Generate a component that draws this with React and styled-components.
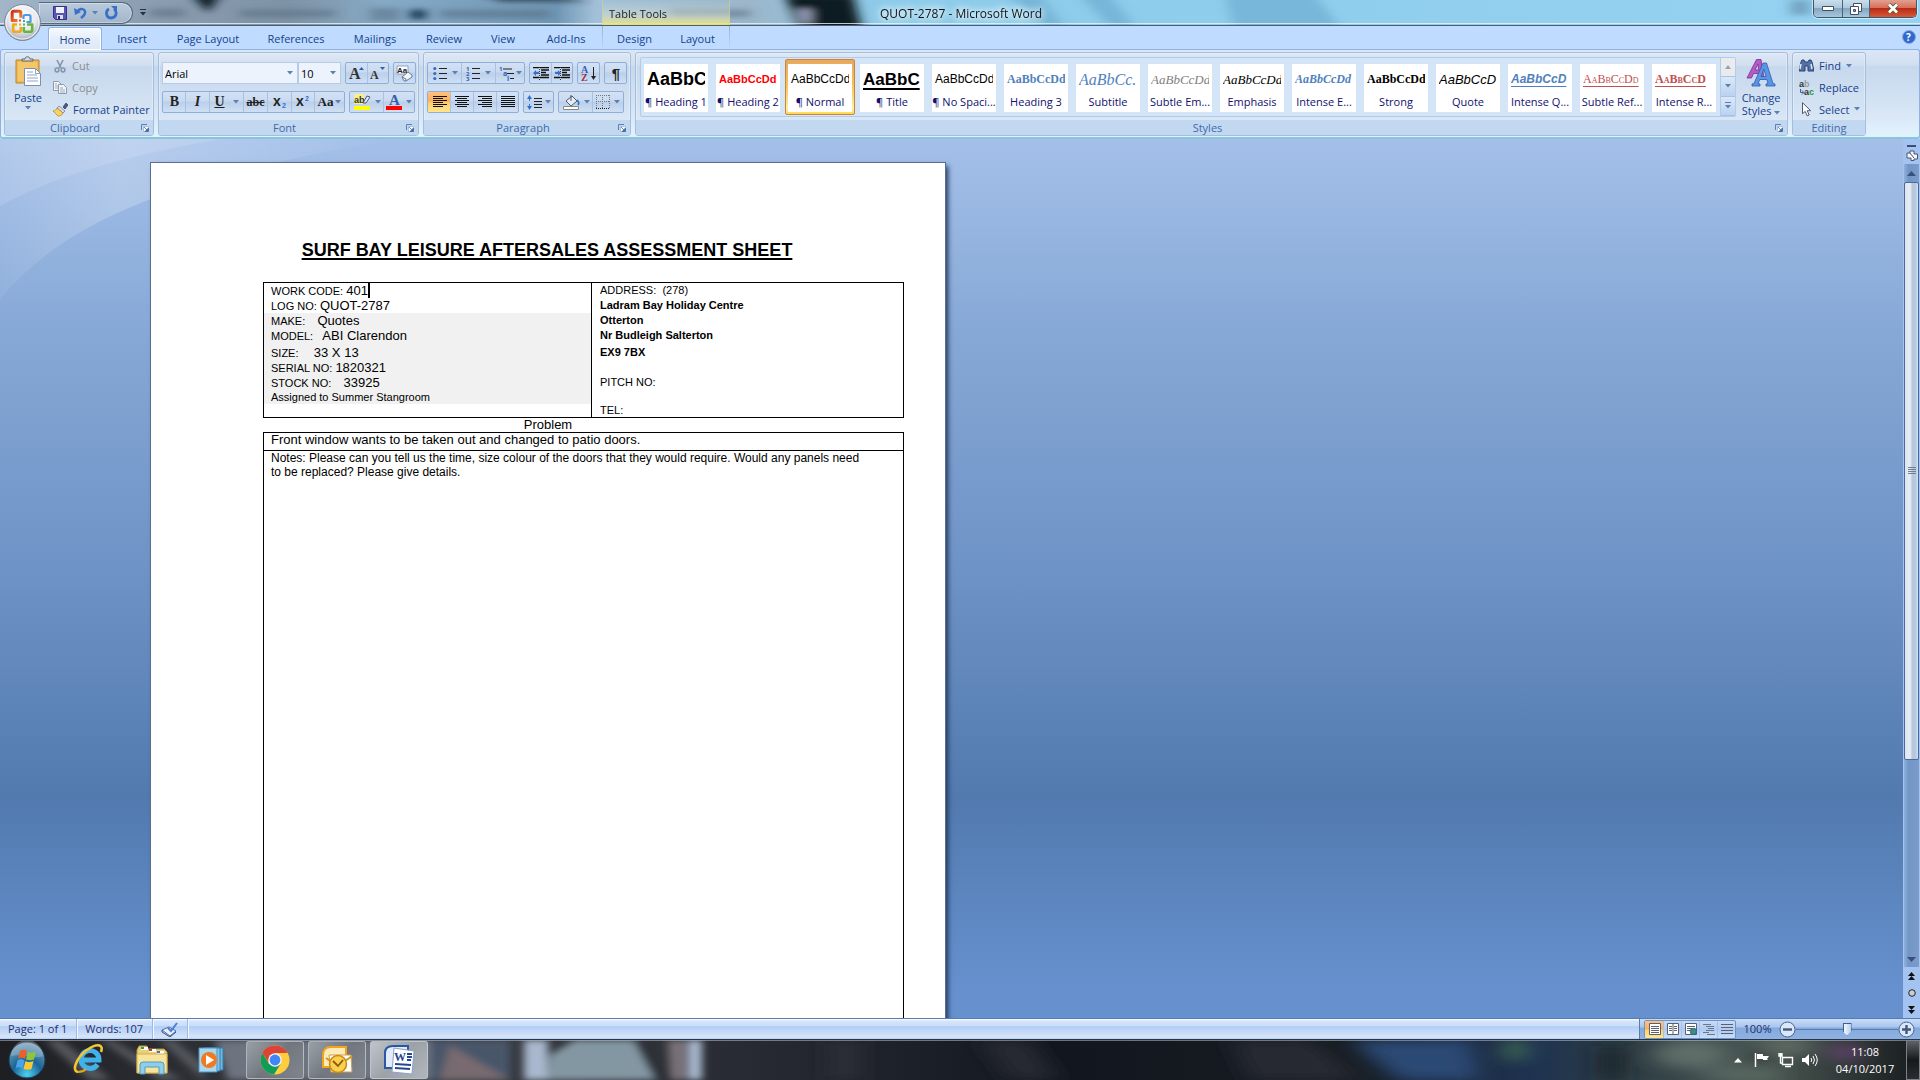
import React from "react";
import styled, { createGlobalStyle, css } from "styled-components";

const Global = createGlobalStyle`
  * { box-sizing: border-box; }
  html, body { margin: 0; padding: 0; overflow: hidden; }
  body { font-family: "Open Sans", "Noto Sans", sans-serif; font-size: 11px; color: #15428b; }
  button, select, input { font: inherit; color: inherit; margin: 0; }
  button { background: none; border: 0; padding: 0; }
`;

const Window = styled.div`
  display: flex;
  flex-direction: column;
  height: 100vh;
  overflow: hidden;
  background: #bfdbff;
  position: relative;
`;

/* ---------- title bar ---------- */
const TitleBar = styled.header`
  position: relative;
  display: grid;
  grid-template-columns: 1fr auto 1fr;
  height: 26px;
  flex: none;
  border-bottom: 1px solid #4c5f70;
  overflow: hidden;
`;
const Scene = styled.svg`
  position: absolute;
  inset: 0;
  width: 100%;
  height: 100%;
`;
const TitleLeft = styled.div`
  position: relative;
  display: flex;
`;
const QuickAccess = styled.div`
  display: flex;
  align-items: center;
  gap: 7px;
  width: 94px;
  height: 22px;
  margin: 2px 0 0 39px;
  padding-left: 14px;
  border: 1px solid #56687b;
  border-left: 0;
  border-radius: 0 11px 11px 0;
  background: linear-gradient(#b9cadb, #a3b6ca);
  box-shadow: inset 0 0 0 1px #ffffff55;
`;
const QuickSlot = styled.div`
  display: flex;
  align-items: flex-start;
  width: 602px;
  flex: none;
`;
const IconButton = styled.button`
  display: inline-flex;
  align-items: center;
  justify-content: center;
  gap: 5px;
`;
const QuickMore = styled(IconButton)`
  height: 24px;
  margin-left: 7px;
`;
const ContextTitle = styled.div`
  width: 128px;
  padding-left: 6px;
  line-height: 28px;
  color: #1c1c1c;
  border: solid #d8d27a88;
  border-width: 0 1px;
  border-bottom: 1px solid #ffe23c;
  background: linear-gradient(#c4dcf000, #d3e0d088 50%, #e0e0a0cc 75%, #f6e650);
`;
const DocTitle = styled.h1`
  position: relative;
  margin: 0;
  padding-left: 2px;
  font-size: 12px;
  font-weight: 400;
  line-height: 28px;
  color: #101418;
  text-shadow: 0 0 6px #fff, 0 0 8px #fff, 0 0 12px #ffffffcc;
`;
const Controls = styled.div`
  position: relative;
  justify-self: end;
  display: flex;
  height: 18px;
  margin-right: 3px;
  border: 1px solid #3f5568;
  border-top: 0;
  border-radius: 0 0 5px 5px;
  overflow: hidden;
  box-shadow: 0 0 0 1px #ffffff88;
`;
const ControlButton = styled(IconButton)`
  width: ${(p) => p.$w}px;
  border-left: ${(p) => (p.$first ? 0 : "1px solid #4a6276")};
  background: ${(p) =>
    p.$close
      ? "linear-gradient(#e3a090 0, #d6705c 45%, #bb2b14 50%, #d4593b 100%)"
      : "linear-gradient(#c9dfee 0, #adc8dc 45%, #86a6bf 50%, #a6c8de 100%)"};
`;
const Orb = styled.button`
  position: absolute;
  left: 4px;
  top: 4px;
  width: 37px;
  height: 37px;
  z-index: 3;
  svg { display: block; }
`;

/* ---------- ribbon ---------- */
const TabRow = styled.nav`
  display: flex;
  align-items: flex-end;
  height: 23px;
  flex: none;
  padding-left: 48px;
  background: #bfdbff;
`;
const Tab = styled.button`
  width: ${(p) => p.$w}px;
  height: 23px;
  line-height: 25px;
  color: #15428b;
  border-radius: 3px 3px 0 0;
  ${(p) =>
    p.$active &&
    css`
      position: relative;
      z-index: 1;
      height: 23px;
      margin-bottom: -1px;
      border: 1px solid #8db2e3;
      border-bottom: 0;
      line-height: 23px;
      background: linear-gradient(#f6faff, #e4edf9 50%, #dfe9f5);
      box-shadow: inset 0 0 0 1px #fff;
    `}
`;
const ContextTabs = styled.div`
  display: flex;
  border: solid #a3c0e4;
  border-width: 0 1px;
  border-image: linear-gradient(#8fb0d8, #bfdbff00) 1;
`;
const Help = styled(IconButton)`
  margin: 0 4px 5px auto;
`;
const Ribbon = styled.section`
  display: flex;
  gap: 4px;
  height: 90px;
  flex: none;
  padding: 2px 53px 1px 3px;
  border: 1px solid #8db2e3;
  border-bottom: 2px solid #86c5dc;
  border-radius: 3px;
  background: linear-gradient(#dbe7f5 0, #d1dfef 17%, #c7d8ed 19%, #d9e7f6 75%, #e2f3fd 100%);
`;
const GroupBox = styled.div`
  display: flex;
  flex-direction: column;
  width: ${(p) => (p.$w ? p.$w + "px" : "auto")};
  flex: ${(p) => (p.$w ? "none" : "1 1 0")};
  min-width: 0;
  border: 1px solid #a4bfde;
  border-radius: 3px;
  box-shadow: inset 0 0 0 1px #e9f1fb88;
  background: linear-gradient(#dee8f5 0, #d2dff0 15%, #c7d8ed 17%, #d8e6f5 80%);
  overflow: hidden;
`;
const GroupBody = styled.div`
  display: flex;
  flex: 1;
  min-height: 0;
  padding: ${(p) => p.$pad || "0"};
  gap: ${(p) => p.$gap || 0}px;
  flex-direction: ${(p) => (p.$col ? "column" : "row")};
`;
const GroupFooter = styled.div`
  display: flex;
  align-items: center;
  height: 15px;
  padding: 0 4px;
  background: #c1d8f0;
  color: #3e6aaa;
  line-height: 15px;
`;
const FooterText = styled.span`
  flex: 1;
  text-align: center;
`;
const BigButton = styled.button`
  display: flex;
  flex-direction: column;
  align-items: center;
  width: ${(p) => p.$w}px;
  flex: none;
  padding-top: ${(p) => p.$top}px;
  line-height: 13px;
  gap: 2px;
  white-space: nowrap;
  svg { flex: none; }
`;
const BigText = styled.span`
  margin-top: 2px;
`;
const Stack = styled.div`
  display: flex;
  flex-direction: column;
  padding-top: 2px;
`;
const TextButton = styled.button`
  display: flex;
  align-items: center;
  gap: 5px;
  height: 22px;
  white-space: nowrap;
  color: ${(p) => (p.$off ? "#8d8d8d" : "#15428b")};
`;
const Row = styled.div`
  display: flex;
  gap: 4px;
  height: 22px;
`;
const ButtonSet = styled.div`
  display: flex;
  border: 1px solid #8eaedb;
  border-radius: 2px;
  background: linear-gradient(#d3e1f4 0, #c9daf0 45%, #bbcfea 50%, #cfe0f4);
`;
const Tool = styled.button`
  display: flex;
  align-items: center;
  justify-content: center;
  gap: ${(p) => p.$gap ?? 4}px;
  width: ${(p) => p.$w}px;
  border-left: 1px solid ${(p) => (p.$first ? "transparent" : "#a9c2e4")};
  background: ${(p) => (p.$on ? "linear-gradient(#fcc183, #fdb057 45%, #fed06f 55%, #ffe58c)" : "none")};
`;
const Glyph = styled.span`
  font: ${(p) => p.$f};
  color: #222;
  text-decoration: ${(p) => p.$deco || "none"};
`;
const Combo = styled.label`
  position: relative;
  display: flex;
  width: ${(p) => p.$w}px;
  svg { position: absolute; right: 5px; top: 9px; pointer-events: none; }
`;
const ComboSelect = styled.select`
  appearance: none;
  width: 100%;
  height: 22px;
  padding: 0 2px;
  border: 1px solid #b5cbe8;
  border-radius: 0;
  background: #ecf3fc;
  color: #000;
`;
const Combos = styled.div`
  display: flex;
`;

/* ---------- style gallery ---------- */
const Gallery = styled.div`
  display: flex;
  flex: 1 1 0;
  min-width: 0;
  height: 60px;
  border: 1px solid #b0cbec;
  border-radius: 2px;
  background: #d4e5f8;
`;
const GalleryItems = styled.div`
  display: flex;
  gap: 2px;
  flex: 1 1 0;
  min-width: 0;
  overflow: hidden;
`;
const GalleryItem = styled.button`
  width: 70px;
  height: 56px;
  flex: none;
  margin-top: 1px;
  padding: 2px;
  border: 1px solid ${(p) => (p.$on ? "#c8873a" : "transparent")};
  border-radius: 2px;
  background: ${(p) => (p.$on ? "linear-gradient(#e8a860, #fbc45a 50%, #fff0a0 90%, #ffd54a)" : "none")};
`;
const Swatch = styled.span`
  display: flex;
  flex-direction: column;
  height: 48px;
  margin-top: 1px;
  background: #fff;
  overflow: hidden;
`;
const Sample = styled.span`
  height: 31px;
  margin: 0 3px;
  overflow: hidden;
  text-align: left;
  white-space: nowrap;
  font: ${(p) => p.$f};
  line-height: 31px;
  color: ${(p) => p.$c || "#000"};
  font-variant-caps: ${(p) => (p.$caps ? "small-caps" : "normal")};
  text-decoration: ${(p) => (p.$under ? "underline" : "none")};
  text-decoration-thickness: ${(p) => p.$under || 1}px;
  text-underline-offset: 3px;
`;
const SampleName = styled.span`
  display: flex;
  justify-content: center;
  line-height: 13px;
  color: #10106e;
  white-space: nowrap;
`;
const GalleryScroll = styled.div`
  display: flex;
  flex-direction: column;
  width: 15px;
  border-left: 1px solid #b0cbec;
`;
const GalleryArrow = styled(IconButton)`
  flex: 1;
  border-bottom: 1px solid #a9c2e4;
  background: ${(p) => (p.$off ? "#e9ebee" : "linear-gradient(#dbe8f9, #bcd2f0)")};
`;

/* ---------- workspace ---------- */
const Workspace = styled.main`
  position: relative;
  display: flex;
  flex: 1;
  min-height: 0;
  overflow: hidden;
  background: linear-gradient(#a4c0e9 0, #86a8d6 22%, #6d92c5 50%, #527aaf 75%, #6691ce 97%);
`;
const Swoosh = styled.svg`
  position: absolute;
  left: 0;
  top: 0;
`;
const Canvas = styled.div`
  position: relative;
  flex: 1;
  min-width: 0;
  padding: 24px 0 0 151px;
  overflow: hidden;
`;
const Page = styled.article`
  width: 794px;
  min-height: 1123px;
  padding: 76px 40px 0 112px;
  background: #fff;
  box-shadow: 0 0 0 1px #5b6f8d, 3px 3px 5px #1f365a;
  font-family: "Liberation Sans", Arial, sans-serif;
  font-size: 13px;
  color: #000;
`;
const Heading = styled.h2`
  margin: 0 0 20px;
  padding-right: 74px;
  text-align: center;
  font-size: 18px;
  line-height: 23px;
  text-decoration: underline;
  text-decoration-thickness: 2px;
  text-underline-offset: 2px;
`;
const Sheet = styled.table`
  width: 641px;
  border-collapse: collapse;
  td { border: 1px solid #000; padding: 0; vertical-align: top; }
`;
const DetailCell = styled.td`
  width: ${(p) => p.$w}px;
`;
const Line = styled.div`
  height: ${(p) => p.$h || 15}px;
  line-height: ${(p) => (p.$h === 17 ? 19 : p.$h || 15)}px;
  padding-left: ${(p) => (p.$right ? 8 : 7)}px;
  font-size: 11px;
  font-weight: ${(p) => (p.$b ? 700 : 400)};
  background: ${(p) => (p.$shade ? "#f1f1f1" : "transparent")};
  white-space: pre;
`;
const Value = styled.span`
  font-size: 13px;
`;
const Cursor = styled.span`
  display: inline-block;
  width: 2px;
  height: 15px;
  vertical-align: top;
  background: #000;
`;
const Caption = styled.p`
  width: 570px;
  margin: 0;
  text-align: center;
  line-height: 14px;
`;
const TextCell = styled.td`
  height: ${(p) => p.$h}px;
  font-size: ${(p) => p.$s}px;
  line-height: 14px;
  && { padding: 0 6px 0 7px; }
`;
const ScrollColumn = styled.div`
  position: relative;
  display: flex;
  flex-direction: column;
  align-items: stretch;
  width: 17px;
  background: #a5c3f0;
  padding-top: 5px;
`;
const ScrollTool = styled(IconButton)`
  height: ${(p) => p.$h}px;
  flex: none;
  margin-top: ${(p) => (p.$end ? "auto" : 0)};
`;
const Track = styled.div`
  display: flex;
  flex-direction: column;
  flex: 1;
  margin: 0 1px;
  background: linear-gradient(90deg, #8fb0dc, #7296c6 30%, #7c9cc9);
`;
const Thumb = styled.div`
  display: flex;
  align-items: center;
  justify-content: center;
  flex: 0 0 72%;
  border: 1px solid #4d68a0;
  border-radius: 2px;
  background: linear-gradient(90deg, #dfe5ec, #e6edf5 40%, #b7c8dc 55%, #b4c9e0 80%, #d5e2f0);
`;

/* ---------- status bar ---------- */
const Status = styled.footer`
  display: flex;
  height: 22px;
  flex: none;
  border-top: 1px solid #567db1;
  border-bottom: 1px solid #26364d;
  line-height: 20px;
  color: #1c2f6b;
  background: linear-gradient(#fff 0, #d7e5fa 10%, #cadefa 34%, #b2cef5 38%, #d6e5fa 90%, #b9cfee);
`;
const StatusItem = styled.button`
  display: flex;
  align-items: center;
  padding: 0 9px 0 8px;
  border-right: 1px solid #9dbbe2;
  box-shadow: 1px 0 0 #f2f7ff;
`;
const StatusRight = styled.div`
  display: flex;
  align-items: center;
  width: 281px;
  margin-left: auto;
  padding: 0 5px 0 4px;
  border-left: 1px solid #567db1;
  background: linear-gradient(#c9dcf8 0, #a9c5ef 40%, #84a9db 45%, #8fb2e3);
`;
const ViewSet = styled.div`
  display: flex;
  height: 19px;
  border: 1px solid #6c93c9;
  border-radius: 2px;
  background: linear-gradient(#c6dbf8, #b0cbf3 50%, #cadefa);
`;
const ZoomText = styled.button`
  width: 43px;
`;
const ZoomStep = styled(IconButton)`
  width: 17px;
`;
const ZoomRange = styled.input`
  appearance: none;
  flex: 1;
  min-width: 0;
  height: 16px;
  background: linear-gradient(#587fb3, #587fb3) center / 100% 1px no-repeat;
  &::-webkit-slider-thumb {
    appearance: none;
    width: 9px;
    height: 13px;
    border: 1px solid #3c5f96;
    background: linear-gradient(90deg, #f4f8ff, #b9cff0);
    clip-path: polygon(0 0, 100% 0, 100% 65%, 50% 100%, 0 65%);
  }
`;

/* ---------- taskbar ---------- */
const Taskbar = styled.footer`
  position: relative;
  display: flex;
  height: 40px;
  flex: none;
  background: #15191f;
  overflow: hidden;
`;
const TaskItems = styled.div`
  position: relative;
  display: flex;
  align-items: stretch;
  padding: 1px 0;
`;
const Launch = styled(IconButton)`
  width: ${(p) => p.$w}px;
`;
const Running = styled(IconButton)`
  width: 58px;
  margin-right: 4px;
  border: 1px solid #c8cdd4aa;
  border-radius: 3px;
  background: ${(p) =>
    p.$front
      ? "linear-gradient(135deg, #d5d9ddcc, #a9adb2cc 50%, #c4c8cccc)"
      : "linear-gradient(135deg, #b4b8bcaa, #75797faa 50%, #8b8e93aa)"};
`;
const Tray = styled.div`
  position: relative;
  display: flex;
  align-items: center;
  margin-left: auto;
  color: #fff;
`;
const TrayIcons = styled.div`
  display: flex;
  align-items: center;
  gap: 8px;
  padding-right: 8px;
`;
const Clock = styled.button`
  width: 78px;
  line-height: 17px;
  text-align: center;
`;
const ClockLine = styled.span`
  display: block;
`;
const ShowDesktop = styled.button`
  align-self: stretch;
  width: 14px;
  margin-left: 2px;
  border: 1px solid #7c8288;
  background: linear-gradient(#5d6266, #16191c 50%, #2a2e31);
`;

/* ---------- drawings ---------- */
const Svg = ({ w, h = w, children, ...r }) => (
  <svg width={w} height={h} viewBox={`0 0 ${w} ${h}`} aria-hidden="true" {...r}>
    {children}
  </svg>
);
const Caret = ({ c = "#5b80b6" }) => (
  <Svg w={6} h={4}><path d="M0 0h6L3 3.5z" fill={c} /></Svg>
);
const Launcher = ({ label }) => (
  <IconButton aria-label={label}>
    <Svg w={8}>
      <path d="M.5 6V.5H6" fill="none" stroke="#5b80b6" />
      <path d="M2.500 2.500h5v5h-5z" fill="#fff" stroke="#8aa7cf" strokeWidth=".6" />
      <path d="M3 3l4 4M7.500 4v3.500H4z" stroke="#44699f" fill="#44699f" strokeWidth=".8" />
    </Svg>
  </IconButton>
);
const Office = () => (
  <Svg w={37}>
    <defs>
      <radialGradient id="orb" cx=".5" cy=".35" r=".65">
        <stop offset="0" stopColor="#fff" /><stop offset=".6" stopColor="#e6e9ee" /><stop offset="1" stopColor="#a3acb9" />
      </radialGradient>
      <linearGradient id="ember" x1="0" y1="0" x2="1" y2="1">
        <stop offset="0" stopColor="#c93410" /><stop offset="1" stopColor="#f58a3a" />
      </linearGradient>
    </defs>
    <circle cx="18.500" cy="18.500" r="18" fill="url(#orb)" stroke="#75859a" />
    <circle cx="18.500" cy="18.500" r="16.500" fill="none" stroke="#fff" opacity=".8" />
    <g fill="none" strokeLinejoin="round">
      <path d="M13.500 16.500H8.200V8.800q0-1.600 1.600-1.600h5.400q1.600 0 1.600 1.600v5" stroke="url(#ember)" strokeWidth="3" />
      <path d="M19.500 15v-2.500q0-1.500 1.500-1.500h4q1.500 0 1.500 1.500v5.500h-4" stroke="#4a9be0" strokeWidth="2.200" />
      <path d="M13 20.500H9.200v5.800q0 1.500 1.500 1.500h4.600q1.500 0 1.500-1.500V23" stroke="#f2a81d" strokeWidth="2.600" />
      <path d="M19.800 23v3.300q0 1.500 1.500 1.500h5.400q1.500 0 1.500-1.500v-5.800H23" stroke="#6cb33e" strokeWidth="2.600" />
    </g>
    <path d="M15 15.500h2v2h-2z" fill="#e2511b" /><path d="M19 16h2v2h-2z" fill="#4a9be0" />
    <path d="M15 19.500h2v2h-2z" fill="#f2a81d" /><path d="M19 19.500h2v2h-2z" fill="#6cb33e" />
  </Svg>
);
const Save = () => (
  <Svg w={14}>
    <path d="M.5.500h13v13h-11l-2-2z" fill="#5b53b8" stroke="#383085" />
    <path d="M3 1h8v6H3z" fill="#eef2fb" /><path d="M4 9h6v4H4z" fill="#d9dff0" /><path d="M5 10h2v3H5z" fill="#29246b" />
  </Svg>
);
const Undo = () => (
  <Svg w={13} h={14}>
    <path d="M3 6C6 1 12 3 11 7c-.5 3-3 4-4 5" fill="none" stroke="#3a6fc8" strokeWidth="2.500" />
    <path d="M0 2l1 7 6-3z" fill="#3a6fc8" />
  </Svg>
);
const Redo = () => (
  <Svg w={13} h={14}>
    <path d="M4 3C0 5 1 12 6 12s7-6 3-9" fill="none" stroke="#3a6fc8" strokeWidth="2.800" />
    <path d="M6 0h6v6z" fill="#3a6fc8" />
  </Svg>
);
const Paste = () => (
  <Svg w={27} h={31}>
    <path d="M1 4h23v23H1z" fill="#eeb951" stroke="#b98530" />
    <path d="M3 6h19v19H3z" fill="#f3c76c" />
    <path d="M7 5V3h3c0-3 5-3 5 0h3v2z" fill="#d8dbe0" stroke="#5f6670" />
    <path d="M9.500 12.500h11l5 5v12h-16z" fill="#fff" stroke="#7a8fb5" />
    <path d="M20.500 12.500v5h5M12 16h6M12 19h10M12 22h11M12 25h11" fill="none" stroke="#8fa3c6" />
  </Svg>
);
const Cut = () => (
  <Svg w={14}>
    <path d="M4 1l4 8M10 1L6 9" stroke="#8694a8" strokeWidth="1.600" />
    <circle cx="4" cy="11" r="1.900" fill="none" stroke="#8694a8" strokeWidth="1.500" />
    <circle cx="10" cy="11" r="1.900" fill="none" stroke="#8694a8" strokeWidth="1.500" />
  </Svg>
);
const Copy = () => (
  <Svg w={14} h={13}>
    <path d="M.5.500h5l3 3v6h-8z" fill="#f1f3f6" stroke="#8d9bb0" /><path d="M5.500 3.500h5l3 3v6h-8z" fill="#f1f3f6" stroke="#8d9bb0" />
    <path d="M7 7h3M7 9h5M7 11h5M2 3h2M2 5h3M2 7h3" stroke="#a5afbf" />
  </Svg>
);
const Brush = () => (
  <Svg w={15}>
    <path d="M10 5l3-4 2 2-3 4z" fill="#4a5a86" stroke="#2d3a63" strokeWidth=".7" />
    <path d="M6 4l6 5-2 2-6-5z" fill="#d9dce3" stroke="#6f7786" strokeWidth=".7" />
    <path d="M4 6l6 5c-1 3-4 3-5 3L0 9c2 0 3-1 4-3z" fill="#f5d36a" stroke="#a98423" strokeWidth=".7" />
  </Svg>
);
const GrowFont = ({ up }) => (
  <Svg w={16} h={15}>
    <text x="0" y="13" fontFamily="Liberation Serif, serif" fontWeight="700" fontSize={up ? 16 : 12} fill="#333">A</text>
    {up ? <path d="M10 4h5l-2.500-3z" fill="#2f5fb0" /> : <path d="M10 1h5l-2.500 3z" fill="#2f5fb0" />}
  </Svg>
);
const ClearFormat = () => (
  <Svg w={18} h={17}>
    <path d="M1 1h11v8H1z" fill="#fff" stroke="#7a8fb5" strokeWidth=".8" />
    <text x="1" y="8" fontSize="8" fontFamily="Liberation Sans, sans-serif" fontWeight="700" fill="#222">Aa</text>
    <path d="M6 12l6-5 4 3v2l-6 4H8z" fill="#f2f4f8" stroke="#68788f" /><path d="M6 12l4 2v2" fill="none" stroke="#68788f" />
  </Svg>
);
const Script = ({ sup }) => (
  <Svg w={14} h={14}>
    <text x="0" y="11" fontFamily="Liberation Sans, sans-serif" fontWeight="700" fontSize="14" fill="#222">x</text>
    <text x="9" y={sup ? 6 : 13} fontFamily="Liberation Sans, sans-serif" fontWeight="700" fontSize="7" fill="#2f6fd0">2</text>
  </Svg>
);
const Highlight = () => (
  <Svg w={17} h={16}>
    <path d="M0 0h10v10H0z" fill="#f5ef8e" />
    <text x="0" y="9" fontFamily="Liberation Sans, sans-serif" fontSize="9" fontWeight="700" fill="#333">ab</text>
    <path d="M9 9l4-7 3 1-4 6z" fill="#e5e9f2" stroke="#4d5b76" /><path d="M0 12h16v4H0z" fill="#ff0" />
  </Svg>
);
const FontColor = () => (
  <Svg w={16} h={16}>
    <text x="3" y="11" fontFamily="Liberation Serif, serif" fontSize="15" fontWeight="700" fill="#3560a8">A</text>
    <path d="M0 12h16v4H0z" fill="red" />
  </Svg>
);
const rows = [2, 7, 12];
const List = ({ kind }) => (
  <Svg w={15} h={15}>
    {kind === "multi" ? (
      <>
        <path d="M4 3h9M8 7.500h7M11 12.500h4" stroke="#222" />
        <text x="0" y="5" fontSize="6" fontWeight="700" fill="#2f5fb0">1</text>
        <text x="4" y="10" fontSize="7" fontWeight="700" fill="#2f5fb0">a</text>
        <text x="8" y="15" fontSize="7" fontWeight="700" fill="#2f5fb0">i</text>
      </>
    ) : (
      rows.map((y, i) => (
        <g key={y}>
          <path d={`M6 ${y + 0.5}h8`} stroke="#222" />
          {kind === "num" ? (
            <text x="0" y={y + 3} fontSize="6" fontWeight="700" fill="#2f5fb0">{i + 1}</text>
          ) : (
            <circle cx="1.800" cy={y + 0.5} r="1.600" fill="#3d6ab8" />
          )}
        </g>
      ))
    )}
  </Svg>
);
const Indent = ({ more }) => (
  <Svg w={16} h={13}>
    <path d="M0 .5h6M7 .5h9M8 3h8M8 5.500h5M8 8h8M0 10.500h6M7 10.500h9" stroke="#111" strokeWidth="1.400" />
    <path d="M6.500 0v13" stroke="#333" strokeDasharray="1 1" />
    {more ? <path d="M1 4.800h3V3l3 3-3 3V7H1z" fill="#3a6fc8" /> : <path d="M6 4.800H3V3L0 6l3 3V7h3z" fill="#3a6fc8" />}
  </Svg>
);
const Sort = () => (
  <Svg w={16} h={17}>
    <text x="0" y="8" fontFamily="Liberation Serif, serif" fontSize="10" fontWeight="700" fill="#3560b8">A</text>
    <text x="0" y="16" fontFamily="Liberation Serif, serif" fontSize="10" fontWeight="700" fill="#a03040">Z</text>
    <path d="M12.500 2v11" stroke="#222" /><path d="M10 11h5l-2.500 4z" fill="#222" />
  </Svg>
);
const Align = ({ k }) => (
  <Svg w={14} h={12}>
    {[0, 2, 4, 6, 8, 10].map((y, i) => {
      const short = i % 2 === 1 && k !== "full";
      const x = !short ? 0 : k === "left" ? 0 : k === "right" ? 4 : 2;
      return <path key={y} d={`M${x} ${y + 0.5}h${short ? 10 : 14}`} stroke="#111" />;
    })}
  </Svg>
);
const Spacing = () => (
  <Svg w={15} h={15}>
    <path d="M2.500 3v9" stroke="#2f6fd0" strokeDasharray="3 3" /><path d="M0 4h5L2.500 0zM0 11h5l-2.500 4z" fill="#2f6fd0" />
    <path d="M7 3.500h8M7 6.500h8M7 9.500h8M7 12.500h8" stroke="#222" />
  </Svg>
);
const Bucket = () => (
  <Svg w={17} h={16}>
    <path d="M3 7l6-5 5 5-6 5z" fill="#e9eef6" stroke="#4c5a72" /><path d="M8 1v6" stroke="#4c5a72" />
    <path d="M14 6c2 2 2 4 1 5" fill="none" stroke="#3a6fc8" strokeWidth="1.800" />
    <path d="M.5 12.500h15v3H.5z" fill="#fff" stroke="#888" />
  </Svg>
);
const Borders = () => (
  <Svg w={14} h={14}>
    <path d="M.5 0v14M13.500 0v14M0 .5h14M6.500 0v14M0 6.500h14" stroke="#777" strokeDasharray="1 1" />
    <path d="M0 13.500h14" stroke="#222" strokeDasharray="1 1" />
  </Svg>
);
const ChangeStyles = () => (
  <Svg w={30} h={29}>
    <path d="M1 20L10.500 1.500H15L18 20h-4.500l-.5-4.500H7.500L5.500 20zM9 12h3.700L12 6z" fill="#b45cc6" stroke="#7c2b92" strokeWidth=".8" fillRule="evenodd" />
    <path d="M6 28v-2l2-.5L17 5h3.500L27 25.500l2 .5v2h-9v-2l2-.5-1.200-4h-7L12 25.500l2 .5v2zM15 18.500h5L17.800 11z" fill="#5b95e6" stroke="#2b5cab" strokeWidth=".8" fillRule="evenodd" />
  </Svg>
);
const Find = () => (
  <Svg w={15} h={13}>
    <path d="M2 3l1-2h2l1 2h3l1-2h2l1 2 2 9H9V7H6v5H0z" fill="#5372a8" stroke="#2b4270" /><path d="M2 5l-1 5M12 5l1 5" stroke="#dfe8f7" strokeWidth="1.500" />
  </Svg>
);
const Replace = () => (
  <Svg w={15} h={16}>
    <text x="0" y="7" fontFamily="Liberation Sans, sans-serif" fontSize="9" fontWeight="700" fill="#333">a<tspan fill="#9a9a9a">b</tspan></text>
    <text x="5" y="15" fontFamily="Liberation Sans, sans-serif" fontSize="9" fontWeight="700" fill="#333">a<tspan fill="#2a9a2a">c</tspan></text>
    <path d="M1.500 9v3.500h3M3 10.500l2 2-2 2" fill="none" stroke="#3a5f9e" />
  </Svg>
);
const Pointer = () => (
  <Svg w={15} h={15}>
    <path d="M3.500.7v11l2.700-2.300 2 4.500 2-.9-2-4.300h3.500z" fill="#fff" stroke="#4c5a72" />
  </Svg>
);
const Proof = () => (
  <Svg w={17} h={15}>
    <path d="M1 8l7-3 7 4-6 5z" fill="#e8eefb" stroke="#4d6ba5" /><path d="M1 8v2l8 5 6-5" fill="none" stroke="#34528c" />
    <path d="M7 6l3 3 6-8" fill="none" stroke="#4a7fd6" strokeWidth="2" />
  </Svg>
);
const View = ({ k }) => (
  <Svg w={12} h={12}>
    {k < 3 && <path d="M.5.500h11v11H.5z" fill="#fff" stroke="#59616e" />}
    {k === 0 && <path d="M2 3.500h8M2 5.500h8M2 7.500h8M2 9.500h8" stroke="#59616e" />}
    {k === 1 && <path d="M6 1v11M2 3.500h3M2 5.500h3M2 7.500h3M7 3.500h3M7 5.500h3M7 7.500h3" stroke="#59616e" />}
    {k === 2 && <><path d="M2 3.500h8M2 5.500h5M2 7.500h3" stroke="#59616e" /><circle cx="8.500" cy="8.500" r="3.200" fill="#3e8f6a" stroke="#2860a8" /></>}
    {k === 3 && <path d="M0 1.500h8M3 3.500h8M5 5.500h6M3 7.500h8M0 9.500h6M4 11.500h8" stroke="#6c7685" />}
    {k === 4 && <path d="M0 1.500h12M0 4.500h12M0 7.500h12M0 10.500h12" stroke="#59616e" />}
  </Svg>
);
const ZoomGlyph = ({ plus }) => (
  <Svg w={17}>
    <circle cx="8.500" cy="8.500" r="7.500" fill="#d9e7fb" stroke="#46638f" />
    <path d={plus ? "M4 8.500h9M8.500 4v9" : "M4 8.500h9"} stroke="#45587a" strokeWidth="2.400" />
  </Svg>
);
const StartOrb = () => (
  <Svg w={38}>
    <defs>
      <radialGradient id="start" cx=".5" cy=".9" r=".9">
        <stop offset="0" stopColor="#4fd0f2" /><stop offset=".45" stopColor="#1a6598" /><stop offset="1" stopColor="#7fa5bb" />
      </radialGradient>
    </defs>
    <circle cx="19" cy="19" r="18" fill="url(#start)" stroke="#1b3850" />
    <path d="M3 15a16 16 0 0 1 32 0c-8 4-20-3-32 0z" fill="#fff" opacity=".22" />
    <path d="M12 10c3-2 5-1 7 0l-2 8c-2-1-4-2-7 0z" fill="#e8602c" />
    <path d="M20 10.500c3 2 5 1 8 0l-2 8c-3 1-5 1-8 0z" fill="#8cc63f" />
    <path d="M9.500 19.500c3-2 5-1 7 0l-2 8c-2-1-4-2-7 0z" fill="#4aa3e8" />
    <path d="M17.500 20c3 2 5 1 8 0l-2 8c-3 1-5 1-8 0z" fill="#fcc830" />
  </Svg>
);
const Explorer = () => (
  <Svg w={33} h={30}>
    <path d="M2 5l2-4h8l1 3h16l3 3v21H2z" fill="#e9cf79" stroke="#b9953a" />
    <path d="M6 2h7v3H6zM14 4h7v3h-7zM22 6h7v3h-7z" fill="#fff" /><path d="M6 2h3v2H6z" fill="#2fa33c" /><path d="M14 4h3v2h-3z" fill="#c8372d" /><path d="M22 6h3v2h-3z" fill="#3b78c9" />
    <path d="M2 9h30v19H2z" fill="#f6e49c" stroke="#cfae56" />
    <path d="M5 29V20q0-3 3-3h18q3 0 3 3v9h-5v-7H10v7z" fill="#8fcdea" stroke="#4e9cc4" />
  </Svg>
);
const IE = () => (
  <Svg w={32} h={32}>
    <path d="M24.500 20.500A9 9 0 1 1 26 16H10" fill="none" stroke="#3fb2ec" strokeWidth="5" />
    <path d="M5 28C-2 27 4 13 14 6S31 0 28 8" fill="none" stroke="#f7c52d" strokeWidth="2.600" />
    <path d="M5 28c3 0 6-1 8-3" fill="none" stroke="#e3a51e" strokeWidth="2" />
  </Svg>
);
const Media = () => (
  <Svg w={28} h={26}>
    <path d="M8 1h17v22H8z" fill="#6fb7de" stroke="#357fae" /><path d="M5 1h17v23H5z" fill="#85c4e6" stroke="#357fae" /><path d="M1 1h18v24H1z" fill="#a8d6ee" stroke="#4a92bd" />
    <circle cx="11" cy="13" r="8" fill="#f07a22" /><path d="M8 8l8 5-8 5z" fill="#fff" />
  </Svg>
);
const Chrome = () => (
  <Svg w={30}>
    <circle cx="15" cy="15" r="14.500" fill="#ffcd40" />
    <path d="M2.400 7.800A14.500 14.500 0 0 0 14 29.500L20.900 18.400 9 19z" fill="#0f9d58" />
    <path d="M2.400 7.800A14.500 14.500 0 0 1 27.600 8H15L9 18.500z" fill="#db4437" />
    <circle cx="15" cy="15" r="6.800" fill="#f4f4f4" /><circle cx="15" cy="15" r="5.400" fill="#4285f4" />
  </Svg>
);
const Outlook = () => (
  <Svg w={32} h={30}>
    <path d="M2 10Q2 2 10 2h15v20H2z" fill="#fdebb8" stroke="#f0a420" strokeWidth="2" />
    <path d="M8 10h22l1 17H10z" fill="#fff" stroke="#c9a04e" /><path d="M5 13q12 10 26-2" fill="none" stroke="#d79a20" strokeWidth="2" />
    <circle cx="17" cy="19" r="8.500" fill="#fbd04c" stroke="#c98a14" strokeWidth="1.500" /><path d="M12 16l5 5 5-6" fill="none" stroke="#8a5a10" strokeWidth="1.800" />
  </Svg>
);
const Word = () => (
  <Svg w={32} h={32}>
    <path d="M2 24V9q0-7 8-7h15v22z" fill="#e3ecfa" stroke="#2b57a5" strokeWidth="2" />
    <path d="M11 4l20 3-2 23-20-2z" fill="#fff" stroke="#8aa2cc" />
    <text x="11" y="17" fontSize="12" fontWeight="700" fontFamily="Liberation Serif, serif" fill="#24478f">W</text>
    <path d="M24 10h5M24 13h5M24 16h4M12 20l16 1M12 24l15 1" stroke="#24478f" strokeWidth="2" />
  </Svg>
);

const TitleScene = () => (
  <Scene viewBox="0 0 1920 26" preserveAspectRatio="none" aria-hidden="true">
    <defs>
      <filter id="haze" x="-5%" y="-50%" width="110%" height="200%"><feGaussianBlur stdDeviation="6 3" /></filter>
      <linearGradient id="sky" x1="0" x2="1">
        <stop offset="0" stopColor="#a3b6c9" /><stop offset=".07" stopColor="#8d9fb2" /><stop offset=".15" stopColor="#7f93a6" />
        <stop offset=".2" stopColor="#86aac6" /><stop offset=".29" stopColor="#6f97b6" /><stop offset=".31" stopColor="#a2c0d8" />
        <stop offset=".39" stopColor="#9cb6ca" /><stop offset=".46" stopColor="#8ccbe9" /><stop offset="1" stopColor="#96d2f2" />
      </linearGradient>
    </defs>
    <path d="M0 0h1920v26H0z" fill="url(#sky)" />
    <g filter="url(#haze)">
      <path d="M192-5h28l-12 18z" fill="#101d26" /><path d="M150 9h35v9h-35zM240 10h95v8h-95zM370 8h30v14h-30zM440 10h110v9h-110zM670 10h80v8h-80z" fill="#53677c" opacity=".5" />
      <path d="M410 10h16v10h-16z" fill="#1d3c58" /><path d="M480-8h60l50 10h-90z" fill="#2b3b47" opacity=".8" />
      <path d="M785-5h68l10 40h-62z" fill="#0e1b22" /><path d="M798 9h13v16h-9z" fill="#9aa3bd" />
      <path d="M1010-5h30l30 40h-20zM1080-5h30l30 40h-24zM1225-5h90l30 40h-110z" fill="#5f9fc6" opacity=".5" />
      <path d="M1790 0h20v16h-20z" fill="#5d8aa5" opacity=".6" />
    </g>
    <path d="M0 24.500h1920" stroke="#eef3f6" opacity=".8" />
  </Scene>
);
const TaskScene = () => (
  <Scene viewBox="0 0 1920 40" preserveAspectRatio="none" aria-hidden="true">
    <defs>
      <filter id="soft" x="-5%" y="-50%" width="110%" height="200%"><feGaussianBlur stdDeviation="4 3" /></filter>
      <filter id="softer" x="-5%" y="-80%" width="110%" height="260%"><feGaussianBlur stdDeviation="12 6" /></filter>
      <linearGradient id="night" x1="0" x2="1">
        <stop offset="0" stopColor="#1d1e22" /><stop offset=".2" stopColor="#3c4046" /><stop offset=".4" stopColor="#262931" />
        <stop offset=".55" stopColor="#12171f" /><stop offset=".7" stopColor="#171c22" /><stop offset=".8" stopColor="#1f3352" />
        <stop offset=".84" stopColor="#2a3a42" /><stop offset=".92" stopColor="#4b5853" /><stop offset="1" stopColor="#181c1e" />
      </linearGradient>
    </defs>
    <path d="M0 0h1920v40H0z" fill="url(#night)" />
    <g filter="url(#soft)">
      <path d="M45 0h16l50 40H90zM100 0h12l70 40h-22zM160 0h14l30 25v15z" fill="#55585e" />
      <path d="M215 0h230v40H228z" fill="#7c8591" opacity=".8" /><path d="M430 0h80v40h-80z" fill="#49566a" />
      <path d="M450 5l60 35h-70z" fill="#786a70" /><path d="M524 0h24v40h-24zM688 0h14v40h-14z" fill="#a9b8ce" />
      <path d="M550 15l25-15h60l22 40H548z" fill="#8397a3" /><path d="M633 0h30l10 40h-18z" fill="#2d3138" /><path d="M668 0h18v40h-14z" fill="#7a7278" />
    </g>
    <g filter="url(#softer)">
      <path d="M830 0h30v40h-30zM980 0h50l30 40h-50zM1230 0h80l50 40h-110z" fill="#363a44" opacity=".5" />
      <path d="M1350 0h120l10 40h-80z" fill="#2a4a74" /><path d="M1505 0h20v20h-20z" fill="#3f6c52" />
      <ellipse cx="1690" cy="14" rx="36" ry="14" fill="#77857d" opacity=".6" /><ellipse cx="1790" cy="6" rx="24" ry="9" fill="#77857d" opacity=".5" />
      <ellipse cx="1740" cy="34" rx="40" ry="8" fill="#66746d" opacity=".6" /><ellipse cx="1845" cy="12" rx="18" ry="9" fill="#6b4376" opacity=".8" />
      <path d="M1600 6h24v34h-24zM1755 8h14v20h-14z" fill="#161f28" opacity=".8" />
    </g>
    <path d="M0 .5h1920" stroke="#b6bfc8" opacity=".55" />
  </Scene>
);

const sans = '"Liberation Sans", Arial, sans-serif';
const roman = '"Liberation Serif", "Times New Roman", serif';
const styleList = [
  { n: "¶ Heading 1", t: "AaBbC", f: `700 18px ${sans}` },
  { n: "¶ Heading 2", t: "AaBbCcDd", f: `700 11px ${sans}`, c: "#f00" },
  { n: "¶ Normal", t: "AaBbCcDd", f: `400 12px ${sans}`, on: true },
  { n: "¶ Title", t: "AaBbC", f: `700 17px ${sans}`, under: 2 },
  { n: "¶ No Spaci...", t: "AaBbCcDd", f: `400 12px ${sans}` },
  { n: "Heading 3", t: "AaBbCcDd", f: `700 12px ${roman}`, c: "#4f81bd" },
  { n: "Subtitle", t: "AaBbCc.", f: `italic 400 16px ${roman}`, c: "#4f81bd" },
  { n: "Subtle Em...", t: "AaBbCcDd", f: `italic 400 13px ${roman}`, c: "#808080" },
  { n: "Emphasis", t: "AaBbCcDd", f: `italic 400 13px ${roman}` },
  { n: "Intense E...", t: "AaBbCcDd", f: `italic 700 12px ${roman}`, c: "#4f81bd" },
  { n: "Strong", t: "AaBbCcDd", f: `700 12px ${roman}` },
  { n: "Quote", t: "AaBbCcD", f: `italic 400 13px ${sans}` },
  { n: "Intense Q...", t: "AaBbCcD", f: `italic 700 12px ${sans}`, c: "#4f81bd", under: 1 },
  { n: "Subtle Ref...", t: "AaBbCcDd", f: `400 12px ${roman}`, c: "#c0504d", caps: true, under: 1 },
  { n: "Intense R...", t: "AaBbCcD", f: `700 12px ${roman}`, c: "#c0504d", caps: true, under: 1 },
];
const tabs = [
  ["Home", 54], ["Insert", 60], ["Page Layout", 92], ["References", 84], ["Mailings", 74],
  ["Review", 64], ["View", 54], ["Add-Ins", 72],
];

const Group = ({ name, w, children, launcher = true, ...body }) => (
  <GroupBox $w={w}>
    <GroupBody {...body}>{children}</GroupBody>
    <GroupFooter>
      <FooterText>{name}</FooterText>
      {launcher && <Launcher label={`${name} options`} />}
    </GroupFooter>
  </GroupBox>
);

export default function App() {
  return (
    <Window>
      <Global />
      <TitleBar>
        <TitleScene />
        <TitleLeft>
          <QuickSlot>
            <QuickAccess>
              <IconButton aria-label="Save"><Save /></IconButton>
              <IconButton aria-label="Undo"><Undo /><Caret /></IconButton>
              <IconButton aria-label="Redo"><Redo /></IconButton>
            </QuickAccess>
            <QuickMore aria-label="Customize toolbar">
              <Svg w={6} h={7}><path d="M0 .5h6" stroke="#203048" /><path d="M0 3h6L3 6.500z" fill="#203048" /></Svg>
            </QuickMore>
          </QuickSlot>
          <ContextTitle>Table Tools</ContextTitle>
        </TitleLeft>
        <DocTitle>QUOT-2787 - Microsoft Word</DocTitle>
        <Controls>
          <ControlButton $w={28} $first aria-label="Minimize">
            <Svg w={12} h={5}><path d="M.5.500h11v4H.5z" fill="#fff" stroke="#43505f" /></Svg>
          </ControlButton>
          <ControlButton $w={27} aria-label="Restore">
            <Svg w={12} h={12}><path d="M3.500.500h8v8h-8z" fill="#fff" stroke="#43505f" /><path d="M.5 3.500h8v8h-8z" fill="#fff" stroke="#43505f" /><path d="M3.500 6.500h2v2h-2z" fill="#86a6bf" stroke="#43505f" /></Svg>
          </ControlButton>
          <ControlButton $w={47} $close aria-label="Close">
            <Svg w={12} h={11}><path d="M2 1.500l8 8M10 1.500l-8 8" stroke="#553" strokeWidth="4.500" /><path d="M2 1.500l8 8M10 1.500l-8 8" stroke="#fff" strokeWidth="2.800" /></Svg>
          </ControlButton>
        </Controls>
      </TitleBar>
      <Orb aria-label="Office menu"><Office /></Orb>

      <TabRow>
        {tabs.map(([t, w], i) => <Tab key={t} $w={w} $active={i === 0}>{t}</Tab>)}
        <ContextTabs>
          <Tab $w={63}>Design</Tab>
          <Tab $w={63}>Layout</Tab>
        </ContextTabs>
        <Help aria-label="Help">
          <Svg w={14}><circle cx="7" cy="7" r="6.500" fill="#2f68cf" stroke="#8fa9d3" /><text x="4" y="11" fontSize="10" fontWeight="700" fill="#fff">?</text></Svg>
        </Help>
      </TabRow>

      <Ribbon>
        <Group name="Clipboard" w={150} $pad="0 0 0 4px" $gap={6}>
          <BigButton $w={38} $top={3}><Paste /><BigText>Paste</BigText><Caret /></BigButton>
          <Stack>
            <TextButton $off><Cut />Cut</TextButton>
            <TextButton $off><Copy />Copy</TextButton>
            <TextButton><Brush />Format Painter</TextButton>
          </Stack>
        </Group>

        <Group name="Font" w={261} $col $pad="9px 0 0 3px" $gap={7}>
          <Row>
            <Combos>
              <Combo $w={136}><ComboSelect aria-label="Font"><option>Arial</option></ComboSelect><Caret /></Combo>
              <Combo $w={43}><ComboSelect aria-label="Font size"><option>10</option></ComboSelect><Caret /></Combo>
            </Combos>
            <ButtonSet><Tool $w={21} $first aria-label="Grow font"><GrowFont up /></Tool><Tool $w={21} aria-label="Shrink font"><GrowFont /></Tool></ButtonSet>
            <ButtonSet><Tool $w={21} $first aria-label="Clear formatting"><ClearFormat /></Tool></ButtonSet>
          </Row>
          <Row>
            <ButtonSet>
              <Tool $w={22} $first><Glyph $f={`700 14px ${roman}`}>B</Glyph></Tool>
              <Tool $w={24}><Glyph $f={`italic 700 14px ${roman}`}>I</Glyph></Tool>
              <Tool $w={34} $gap={8}><Glyph $f={`700 14px ${roman}`} $deco="underline">U</Glyph><Caret /></Tool>
              <Tool $w={24}><Glyph $f={`700 12px ${roman}`} $deco="line-through">abc</Glyph></Tool>
              <Tool $w={24} aria-label="Subscript"><Script /></Tool>
              <Tool $w={23} aria-label="Superscript"><Script sup /></Tool>
              <Tool $w={30} $gap={2}><Glyph $f={`700 13px ${roman}`}>Aa</Glyph><Caret /></Tool>
            </ButtonSet>
            <ButtonSet>
              <Tool $w={33} $first aria-label="Highlight"><Highlight /><Caret /></Tool>
              <Tool $w={31} aria-label="Font colour"><FontColor /><Caret /></Tool>
            </ButtonSet>
          </Row>
        </Group>

        <Group name="Paragraph" w={208} $col $pad="9px 0 0 3px" $gap={7}>
          <Row>
            <ButtonSet>
              <Tool $w={33} $first aria-label="Bullets"><List /><Caret /></Tool>
              <Tool $w={34} aria-label="Numbering"><List kind="num" /><Caret /></Tool>
              <Tool $w={29} $gap={2} aria-label="Multilevel list"><List kind="multi" /><Caret /></Tool>
            </ButtonSet>
            <ButtonSet><Tool $w={21} $first aria-label="Decrease indent"><Indent /></Tool><Tool $w={21} aria-label="Increase indent"><Indent more /></Tool></ButtonSet>
            <ButtonSet><Tool $w={21} $first aria-label="Sort"><Sort /></Tool></ButtonSet>
            <ButtonSet><Tool $w={21} $first><Glyph $f={`700 15px ${sans}`}>¶</Glyph></Tool></ButtonSet>
          </Row>
          <Row>
            <ButtonSet>
              <Tool $w={22} $first $on aria-label="Align left"><Align k="left" /></Tool>
              <Tool $w={23} aria-label="Centre"><Align k="center" /></Tool>
              <Tool $w={23} aria-label="Align right"><Align k="right" /></Tool>
              <Tool $w={22} aria-label="Justify"><Align k="full" /></Tool>
            </ButtonSet>
            <ButtonSet><Tool $w={29} $first $gap={3} aria-label="Line spacing"><Spacing /><Caret /></Tool></ButtonSet>
            <ButtonSet>
              <Tool $w={33} $first aria-label="Shading"><Bucket /><Caret /></Tool>
              <Tool $w={31} aria-label="Borders"><Borders /><Caret /></Tool>
            </ButtonSet>
          </Row>
        </Group>

        <Group name="Styles" $pad="4px 3px 0 4px" $gap={2}>
          <Gallery>
            <GalleryItems>
              {styleList.map((s) => (
                <GalleryItem key={s.n} $on={s.on}>
                  <Swatch>
                    <Sample $f={s.f} $c={s.c} $caps={s.caps} $under={s.under}>{s.t}</Sample>
                    <SampleName>{s.n}</SampleName>
                  </Swatch>
                </GalleryItem>
              ))}
            </GalleryItems>
            <GalleryScroll>
              <GalleryArrow $off aria-label="Previous styles"><Svg w={6} h={4}><path d="M0 4h6L3 0z" fill="#9aa3ae" /></Svg></GalleryArrow>
              <GalleryArrow aria-label="Next styles"><Caret /></GalleryArrow>
              <GalleryArrow aria-label="All styles"><Svg w={6} h={7}><path d="M0 .5h6" stroke="#5b80b6" /><path d="M0 3h6L3 6.500z" fill="#5b80b6" /></Svg></GalleryArrow>
            </GalleryScroll>
          </Gallery>
          <BigButton $w={46} $top={1}>
            <ChangeStyles />
            <BigText>Change<br />Styles <Caret /></BigText>
          </BigButton>
        </Group>

        <Group name="Editing" w={74} launcher={false} $pad="0 0 0 6px">
          <Stack>
            <TextButton><Find />Find <Caret /></TextButton>
            <TextButton><Replace />Replace</TextButton>
            <TextButton><Pointer />Select <Caret /></TextButton>
          </Stack>
        </Group>
      </Ribbon>

      <Workspace>
        <Swoosh width="940" height="240" viewBox="0 0 940 240" aria-hidden="true">
          <defs>
            <linearGradient id="wave" x1="0" y1="0" x2="1" y2="0"><stop offset="0" stopColor="#fff" stopOpacity=".05" /><stop offset=".3" stopColor="#fff" stopOpacity=".22" /><stop offset="1" stopColor="#fff" stopOpacity="0" /></linearGradient>
          </defs>
          <path d="M0 160C60 90 150 40 400 0H0z" fill="url(#wave)" />
          <path d="M0 67C50 40 110 20 220 0H0z" fill="#fff" opacity=".12" />
        </Swoosh>
        <Canvas>
          <Page>
            <Heading>SURF BAY LEISURE AFTERSALES ASSESSMENT SHEET</Heading>
            <Sheet>
              <tbody>
                <tr>
                  <DetailCell $w={328}>
                    <Line>WORK CODE: <Value>401</Value><Cursor /></Line>
                    <Line>LOG NO: <Value>QUOT-2787</Value></Line>
                    <Line $shade>MAKE:{"    "}<Value>Quotes</Value></Line>
                    <Line $shade>MODEL:{"   "}<Value>ABI Clarendon</Value></Line>
                    <Line $shade $h={17}>SIZE:{"     "}<Value>33 X 13</Value></Line>
                    <Line $shade>SERIAL NO: <Value>1820321</Value></Line>
                    <Line $shade>STOCK NO:{"    "}<Value>33925</Value></Line>
                    <Line $shade $h={14}>Assigned to Summer Stangroom</Line>
                  </DetailCell>
                  <DetailCell>
                    <Line $right>ADDRESS:{"  "}(278)</Line>
                    <Line $right $b>Ladram Bay Holiday Centre</Line>
                    <Line $right $b>Otterton</Line>
                    <Line $right $b>Nr Budleigh Salterton</Line>
                    <Line $right $b $h={17}>EX9 7BX</Line>
                    <Line $right />
                    <Line $right>PITCH NO:</Line>
                    <Line $right $h={14} />
                    <Line $right $h={13}>TEL:</Line>
                  </DetailCell>
                </tr>
              </tbody>
            </Sheet>
            <Caption>Problem</Caption>
            <Sheet>
              <tbody>
                <tr><TextCell $h={18} $s={13}>Front window wants to be taken out and changed to patio doors.</TextCell></tr>
                <tr><TextCell $h={700} $s={12}>Notes: Please can you tell us the time, size colour of the doors that they would require. Would any panels need<br />to be replaced? Please give details.</TextCell></tr>
              </tbody>
            </Sheet>
          </Page>
        </Canvas>
        <ScrollColumn>
          <ScrollTool $h={3} aria-label="Split"><Svg w={9} h={2}><path d="M0 0h9v2H0z" fill="#3b4f74" /></Svg></ScrollTool>
          <ScrollTool $h={17} aria-label="Ruler"><Svg w={12} h={11}><path d="M1 3h3V1h4v3h3.500v5H8v1.500H5V8H1z" fill="#f5f7fb" stroke="#48556e" /><path d="M4 3l4 5" stroke="#48556e" /></Svg></ScrollTool>
          <Track>
            <ScrollTool $h={18} aria-label="Scroll up"><Svg w={9} h={5}><path d="M0 5h9L4.500 0z" fill="#3b4f7c" /></Svg></ScrollTool>
            <Thumb><Svg w={8} h={8}><path d="M0 .5h8M0 2.500h8M0 4.500h8M0 6.500h8" stroke="#717f95" /></Svg></Thumb>
            <ScrollTool $h={16} $end aria-label="Scroll down"><Svg w={9} h={5}><path d="M0 0h9L4.500 5z" fill="#3b4f7c" /></Svg></ScrollTool>
          </Track>
          <ScrollTool $h={17} aria-label="Previous page"><Svg w={7} h={8}><path d="M0 4h7L3.500 0zM0 8h7L3.500 4z" fill="#111" /></Svg></ScrollTool>
          <ScrollTool $h={17} aria-label="Browse object"><Svg w={8}><circle cx="4" cy="4" r="3.300" fill="#c9ccd2" stroke="#222" /></Svg></ScrollTool>
          <ScrollTool $h={17} aria-label="Next page"><Svg w={7} h={8}><path d="M0 0h7L3.500 4zM0 4h7L3.500 8z" fill="#111" /></Svg></ScrollTool>
        </ScrollColumn>
      </Workspace>

      <Status>
        <StatusItem>Page: 1 of 1</StatusItem>
        <StatusItem>Words: 107</StatusItem>
        <StatusItem aria-label="Proofing"><Proof /></StatusItem>
        <StatusRight>
          <ViewSet>
            {["Print layout", "Full screen reading", "Web layout", "Outline", "Draft"].map((v, i) => (
              <Tool key={v} $w={18} $first={i === 0} $on={i === 0} aria-label={v}><View k={i} /></Tool>
            ))}
          </ViewSet>
          <ZoomText>100%</ZoomText>
          <ZoomStep aria-label="Zoom out"><ZoomGlyph /></ZoomStep>
          <ZoomRange type="range" min="0" max="100" defaultValue="50" aria-label="Zoom" />
          <ZoomStep aria-label="Zoom in"><ZoomGlyph plus /></ZoomStep>
        </StatusRight>
      </Status>

      <Taskbar>
        <TaskScene />
        <TaskItems>
          <Launch $w={54} aria-label="Start"><StartOrb /></Launch>
          <Launch $w={70} aria-label="Internet Explorer"><IE /></Launch>
          <Launch $w={54} aria-label="Explorer"><Explorer /></Launch>
          <Launch $w={68} aria-label="Media Player"><Media /></Launch>
          <Running aria-label="Chrome"><Chrome /></Running>
          <Running aria-label="Outlook"><Outlook /></Running>
          <Running $front aria-label="Word"><Word /></Running>
        </TaskItems>
        <Tray>
          <TrayIcons>
            <Svg w={16} h={5}><path d="M4 4.500h8L8 0z" fill="#fff" /></Svg>
            <Svg w={16} h={16}><path d="M1.500 1v14" stroke="#fff" strokeWidth="1.500" /><path d="M3 2h6v2h6l-2 3 1 1H9V7H3z" fill="#fff" /></Svg>
            <Svg w={16} h={16}><path d="M4.500 5.500h10v7h-10zM7 14.500h6M2.500 1v4M1 1v3h3V1M2.500 5v6h2" fill="none" stroke="#fff" strokeWidth="1.400" /></Svg>
            <Svg w={16} h={14}><path d="M0 5h3l4-4v12L3 9H0z" fill="#fff" /><path d="M9 5q1.500 2 0 4M11 3q3 4 0 8M13 1q4.500 6 0 12" fill="none" stroke="#fff" /></Svg>
          </TrayIcons>
          <Clock><ClockLine>11:08</ClockLine><ClockLine>04/10/2017</ClockLine></Clock>
          <ShowDesktop aria-label="Show desktop" />
        </Tray>
      </Taskbar>
    </Window>
  );
}
